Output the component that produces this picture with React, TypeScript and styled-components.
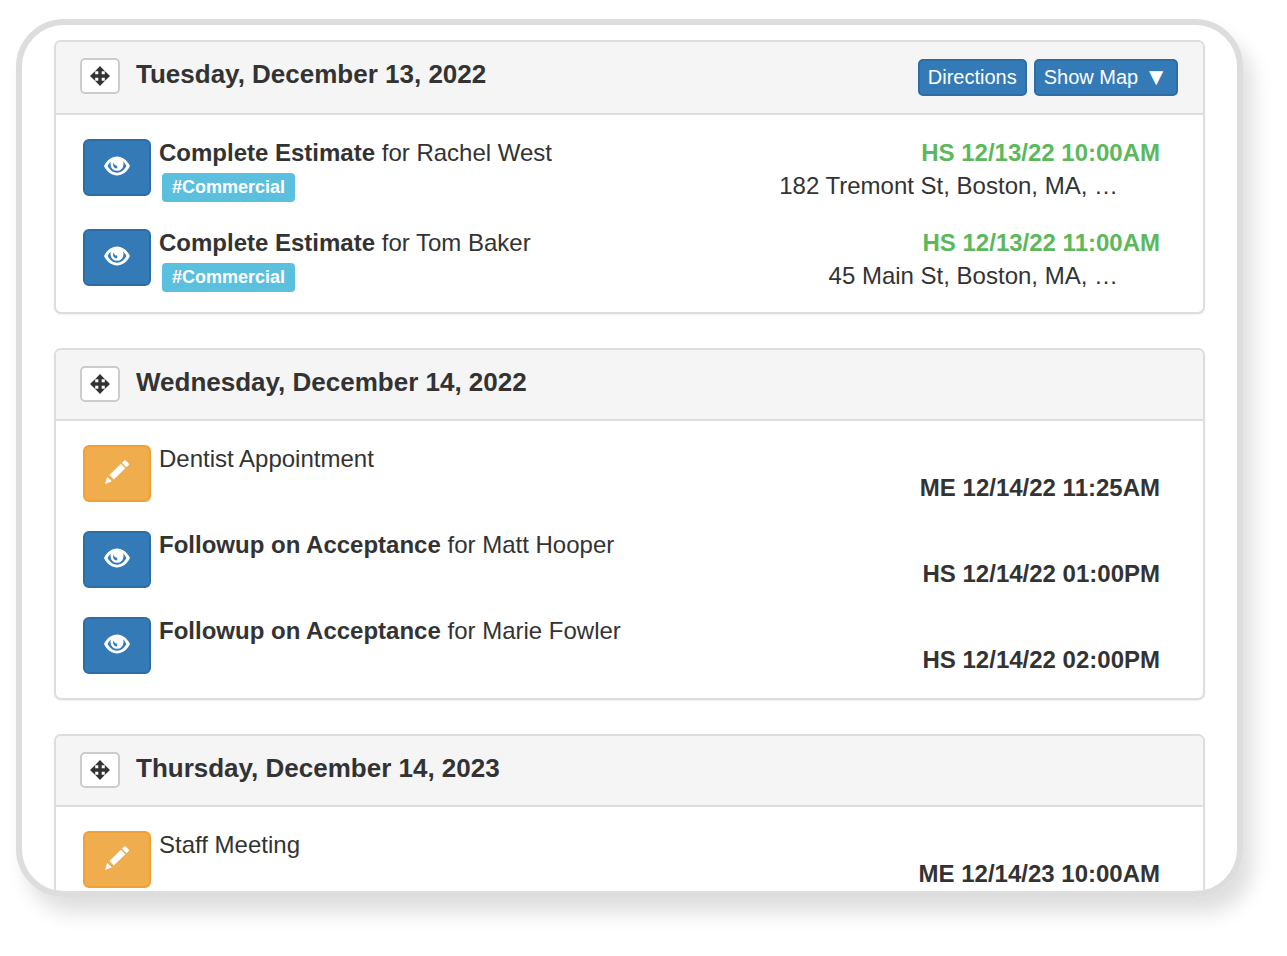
import React from 'react';
import styled, { createGlobalStyle, css } from 'styled-components';

const GlobalStyle = createGlobalStyle`
  *, *::before, *::after { box-sizing: border-box; }
  body {
    margin: 0;
    background: #fff;
    color: #333;
    font-family: 'Helvetica Neue', 'Liberation Sans', Arial, sans-serif;
    font-size: 24px;
    line-height: 28px;
  }
  button { font-family: inherit; cursor: pointer; }
`;

const Page = styled.div`
  height: 100vh;
  padding: 19px 44px 59px 16px;
  overflow: hidden;
`;

const Frame = styled.main`
  height: 100%;
  padding: 15px 32px 0;
  border: 6px solid #ddd;
  border-radius: 48px;
  box-shadow: 10px 16px 20px rgba(0, 0, 0, 0.13);
  overflow: hidden;
`;

const Panel = styled.section`
  margin-bottom: 34px;
  border: 2px solid #ddd;
  border-radius: 7px;
  box-shadow: 0 1px 2px rgba(0, 0, 0, 0.06);
`;

const PanelHeader = styled.header`
  display: flex;
  align-items: flex-start;
  gap: 16px;
  padding: 16px 25px 17px 24px;
  background: #f5f5f5;
  border-bottom: 2px solid #ddd;
  border-radius: 5px 5px 0 0;
`;

const PanelTitle = styled.h2`
  flex: 1;
  margin: 0;
  font-size: 26px;
  line-height: 32px;
  font-weight: 700;
`;

const MoveButton = styled.button`
  display: flex;
  align-items: center;
  justify-content: center;
  width: 40px;
  height: 36px;
  padding: 0;
  color: #333;
  background: #fff;
  border: 2px solid #ccc;
  border-radius: 5px;
`;

const HeaderActions = styled.div`
  display: flex;
  gap: 7px;
  padding-top: 1px;
`;

const ActionButton = styled.button`
  display: flex;
  align-items: center;
  gap: 6px;
  height: 37px;
  padding: 0 8px 2px;
  color: #fff;
  background: #337ab7;
  border: 2px solid #2e6da4;
  border-radius: 5px;
  font-size: 20px;
  line-height: 24px;
`;

const Caret = styled.span`
  font-size: 24px;
`;

const EventList = styled.ul<{ $tagged: boolean }>`
  display: flex;
  flex-direction: column;
  gap: ${p => (p.$tagged ? 27 : 29)}px;
  margin: 0;
  padding: 24px 43px ${p => (p.$tagged ? 20 : 24)}px 27px;
  list-style: none;
`;

const EventRow = styled.li`
  display: flex;
  align-items: flex-start;
  gap: 8px;
`;

const tones = {
  view: css`background: #337ab7; border-color: #2e6da4;`,
  edit: css`background: #f0ad4e; border-color: #eea236;`,
};

const EventButton = styled.button<{ $tone: 'view' | 'edit' }>`
  display: flex;
  align-items: center;
  justify-content: center;
  width: 68px;
  height: 57px;
  padding: 0 0 4px;
  color: #fff;
  border: 2px solid;
  border-radius: 6px;
  ${p => tones[p.$tone]}
`;

const EventInfo = styled.div`
  flex: 1;
  min-width: 0;
`;

const EventTitle = styled.div``;

const Tag = styled.span`
  display: block;
  width: fit-content;
  margin: 6px 0 0 3px;
  padding: 0 10px;
  color: #fff;
  background: #5bc0de;
  border-radius: 4px;
  font-size: 18px;
  line-height: 29px;
  font-weight: 700;
`;

const EventMeta = styled.div<{ $low: boolean }>`
  display: flex;
  flex-direction: column;
  align-items: flex-end;
  gap: 5px;
  padding-top: ${p => (p.$low ? 29 : 0)}px;
`;

const EventTime = styled.time<{ $green: boolean }>`
  color: ${p => (p.$green ? '#5cb85c' : '#333')};
  font-weight: 700;
`;

const Address = styled.span`
  padding-right: 42px;
`;

const MoveIcon = () => (
  <svg width="20" height="20" viewBox="0 0 20 20" fill="currentColor" aria-hidden="true">
    <path d="M10 0l5 5.200h-3.300v3.100h3.100V5L20 10l-5.200 5v-3.300h-3.100v3.100H15L10 20l-5-5.200h3.300v-3.100H5.200V15L0 10l5.200-5v3.300h3.100V5.200H5z" />
  </svg>
);

const EyeIcon = () => (
  <svg width="26" height="20" viewBox="0 0 26 20" fill="currentColor" aria-hidden="true">
    <path
      fillRule="evenodd"
      d="M13 .5C18.200.5 23 4 26 10c-3 6-7.800 9.500-13 9.500S3 16 0 10C3 4 7.800.5 13 .5zM7 5.600C5.500 6.800 4.500 8.300 3.600 10c2.400 4.200 5.600 6.700 9.400 6.700s7-2.500 9.400-6.700c-.9-1.700-1.900-3.200-3.400-4.400.4.900.5 1.800.5 2.700a6.500 6.500 0 0 1-13 0c0-.9.1-1.800.5-2.700zM9.700 6.400c-1.200 2-.6 4.900 1.800 5.900.8.3 1.600 0 1.800-.8.200-.900-.3-1.800-1.100-2.200-.5.200-.9.100-1.300-.3-.6-.7-1-1.600-1.200-2.600z"
    />
  </svg>
);

const PencilIcon = () => (
  <svg width="24" height="24" viewBox="0 0 24 24" fill="currentColor" aria-hidden="true">
    <path d="M19.200.5a1.200 1.200 0 0 1 1.600 0l2.800 2.900a1.200 1.200 0 0 1 0 1.600l-2.200 2.200L17 2.700zM15.900 3.800l4.400 4.400L8.800 19.500l-4.400-4.400zM2.200 17l4.700 4.200L0 24z" />
  </svg>
);

type Item = {
  action?: string;
  name: string;
  tag?: string;
  time: string;
  address?: string;
};

type Day = { date: string; map?: boolean; items: Item[] };

const days: Day[] = [
  {
    date: 'Tuesday, December 13, 2022',
    map: true,
    items: [
      { action: 'Complete Estimate', name: 'Rachel West', tag: '#Commercial', time: 'HS 12/13/22 10:00AM', address: '182 Tremont St, Boston, MA, …' },
      { action: 'Complete Estimate', name: 'Tom Baker', tag: '#Commercial', time: 'HS 12/13/22 11:00AM', address: '45 Main St, Boston, MA, …' },
    ],
  },
  {
    date: 'Wednesday, December 14, 2022',
    items: [
      { name: 'Dentist Appointment', time: 'ME 12/14/22 11:25AM' },
      { action: 'Followup on Acceptance', name: 'Matt Hooper', time: 'HS 12/14/22 01:00PM' },
      { action: 'Followup on Acceptance', name: 'Marie Fowler', time: 'HS 12/14/22 02:00PM' },
    ],
  },
  {
    date: 'Thursday, December 14, 2023',
    items: [{ name: 'Staff Meeting', time: 'ME 12/14/23 10:00AM' }],
  },
];

const Event = ({ item }: { item: Item }) => (
  <EventRow>
    <EventButton $tone={item.action ? 'view' : 'edit'} aria-label={item.action ? 'View' : 'Edit'}>
      {item.action ? <EyeIcon /> : <PencilIcon />}
    </EventButton>
    <EventInfo>
      <EventTitle>
        {item.action ? <><strong>{item.action}</strong> for {item.name}</> : item.name}
      </EventTitle>
      {item.tag && <Tag>{item.tag}</Tag>}
    </EventInfo>
    <EventMeta $low={!item.address}>
      <EventTime $green={!!item.address}>{item.time}</EventTime>
      {item.address && <Address>{item.address}</Address>}
    </EventMeta>
  </EventRow>
);

export default function App() {
  return (
    <Page>
      <GlobalStyle />
      <Frame>
        {days.map(day => (
          <Panel key={day.date}>
            <PanelHeader>
              <MoveButton aria-label="Move"><MoveIcon /></MoveButton>
              <PanelTitle>{day.date}</PanelTitle>
              {day.map && (
                <HeaderActions>
                  <ActionButton>Directions</ActionButton>
                  <ActionButton>Show Map <Caret>▼</Caret></ActionButton>
                </HeaderActions>
              )}
            </PanelHeader>
            <EventList $tagged={day.items.some(i => i.tag)}>
              {day.items.map(item => <Event key={item.time} item={item} />)}
            </EventList>
          </Panel>
        ))}
      </Frame>
    </Page>
  );
}
